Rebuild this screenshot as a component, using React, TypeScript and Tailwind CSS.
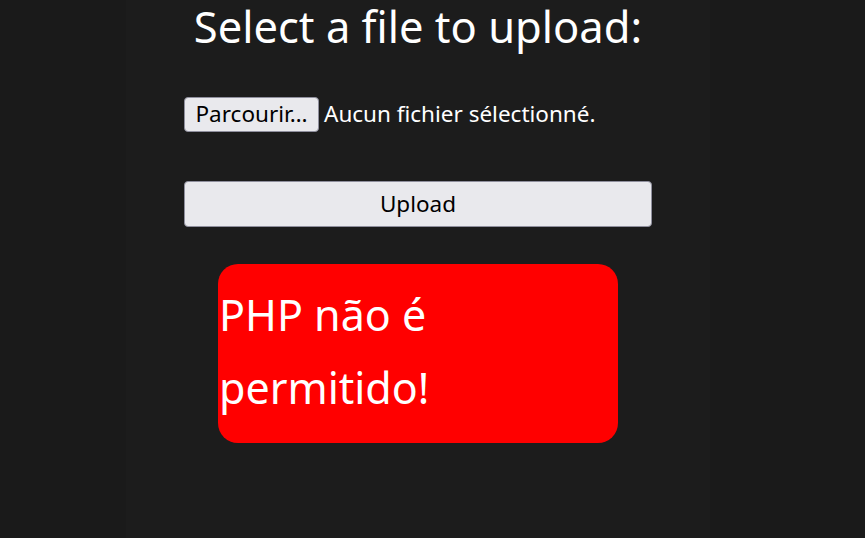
const App = () => {
  return (
    <div className="min-h-[538px] bg-[#1a1a1a] font-['Noto_Sans',sans-serif]">
      <div className="ml-[126px] w-[584px] min-h-[538px] bg-[#1c1c1c] text-white">
        {/* Title */}
        <h1 className="text-center text-[43.5px] leading-[52px] font-normal">
          Select a file to upload:
        </h1>

        <form className="mt-[45px] pl-[58px]" onSubmit={(e) => e.preventDefault()}>
          {/* File picker */}
          <div className="flex items-center gap-[5px]">
            <button
              type="button"
              className="h-[35px] w-[135px] bg-[#e9e9ed] text-black text-[22.5px] leading-none border border-[#8f8f9d] rounded-[4px]"
            >
              Parcourir…
            </button>
            <span className="text-[22.5px] leading-none">Aucun fichier sélectionné.</span>
          </div>

          {/* Upload */}
          <button
            type="submit"
            className="mt-[49px] w-[468px] h-[46px] bg-[#e9e9ed] text-black text-[22.5px] leading-none border border-[#8f8f9d] rounded-[4px]"
          >
            Upload
          </button>
        </form>

        {/* Error */}
        <div className="ml-[92px] mt-[37px] w-[400px] h-[179px] bg-[#ff0000] rounded-[20px] pt-[14px] pl-[1px]">
          <p className="text-[43px] leading-[73px]">PHP não é permitido!</p>
        </div>
      </div>
    </div>
  );
};

export default App;
